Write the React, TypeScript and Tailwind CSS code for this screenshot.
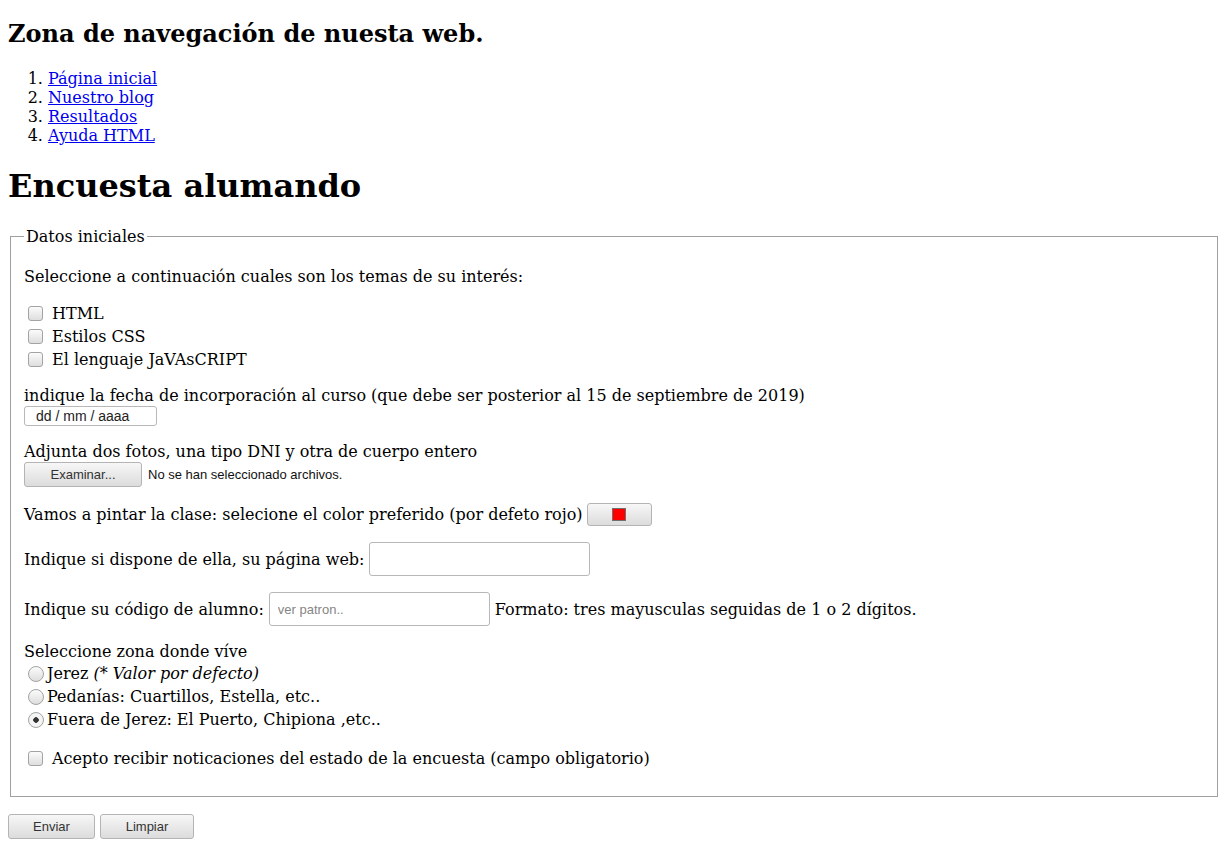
const links = ["Página inicial", "Nuestro blog", "Resultados", "Ayuda HTML"];

const temas = ["HTML", "Estilos CSS", "El lenguaje JaVAsCRIPT"];

const zonas = [
  { label: "Jerez ", note: "(* Valor por defecto)", checked: false },
  { label: "Pedanías: Cuartillos, Estella, etc..", note: "", checked: false },
  { label: "Fuera de Jerez: El Puerto, Chipiona ,etc..", note: "", checked: true },
];

const btn =
  "h-[25px] rounded-[3px] border border-[#b4b4b4] bg-gradient-to-b from-[#f7f7f7] to-[#dcdcdc] font-['Liberation_Sans',sans-serif] text-[13px] text-[#333]";

const checkbox =
  "ml-1 mr-[9px] h-[15px] w-[15px] shrink-0 appearance-none rounded-[3px] border border-[#a3a3a3] bg-gradient-to-b from-[#fbfbfb] to-[#dedede]";

const textInput =
  "h-[34px] w-[221px] rounded-[3px] border border-[#b8b8b8] bg-white px-2 font-['Liberation_Sans',sans-serif] text-[13px] outline-none placeholder:text-[#858585]";

export default function App() {
  return (
    <div className="min-h-screen bg-white p-2 font-['DejaVu_Serif',serif] text-[16px] leading-[19px] text-black">
      <h2 className="mt-3 text-[24px] font-bold leading-[28px]">Zona de navegación de nuesta web.</h2>

      <ol className="mt-[21px] list-decimal pl-10">
        {links.map((l) => (
          <li key={l}>
            <a href="#" className="text-[#0000ee] underline">
              {l}
            </a>
          </li>
        ))}
      </ol>

      <h1 className="mt-[22px] text-[32px] font-bold leading-[38px]">Encuesta alumando</h1>

      <form>
        <fieldset className="mx-0.5 mt-[22px] border border-[#a0a0a0] px-[13px] pb-[26px]">
          <legend className="px-0.5">Datos iniciales</legend>

          <p className="mt-[21px]">Seleccione a continuación cuales son los temas de su interés:</p>

          <div className="mt-4">
            {temas.map((t) => (
              <label key={t} className="flex h-[23px] items-center">
                <input type="checkbox" className={checkbox} />
                {t}
              </label>
            ))}
          </div>

          <p className="mt-[15px]">
            indique la fecha de incorporación al curso (que debe ser posterior al 15 de septiembre de 2019)
          </p>
          <input
            type="text"
            defaultValue="dd / mm / aaaa"
            className="mt-px block h-[20px] w-[133px] rounded-[3px] border border-[#b8b8b8] pl-[11px] font-['Liberation_Sans',sans-serif] text-[14px] text-[#222] outline-none"
          />

          <p className="mt-4">Adjunta dos fotos, una tipo DNI y otra de cuerpo entero</p>
          <div className="mt-px flex items-center">
            <button type="button" className={`${btn} w-[118px]`}>
              Examinar...
            </button>
            <span className="ml-[6px] font-['Liberation_Sans',sans-serif] text-[13px] text-[#111]">
              No se han seleccionado archivos.
            </span>
          </div>

          <div className="mt-4 flex h-[23px] items-center">
            <span>Vamos a pintar la clase: selecione el color preferido (por defeto rojo)</span>
            <button
              type="button"
              className="ml-[4px] flex h-[23px] w-[65px] items-center justify-center rounded-[3px] border border-[#b4b4b4] bg-gradient-to-b from-[#f7f7f7] to-[#dcdcdc]"
            >
              <span className="h-[13px] w-[14px] border border-[#6f6f6f] bg-[#ff0000]" />
            </button>
          </div>

          <div className="mt-4 flex items-center">
            <span>Indique si dispone de ella, su página web:</span>
            <input type="url" className={`${textInput} ml-[5px]`} />
          </div>

          <div className="mt-4 flex items-center">
            <span>Indique su código de alumno:</span>
            <input type="text" placeholder="ver patron.." className={`${textInput} ml-[5px]`} />
            <span className="ml-[5px]">Formato: tres mayusculas seguidas de 1 o 2 dígitos.</span>
          </div>

          <p className="mt-4">Seleccione zona donde víve</p>
          <div className="mt-px">
            {zonas.map((z) => (
              <label key={z.label} className="flex h-[23px] items-center">
                <input
                  type="radio"
                  name="zona"
                  defaultChecked={z.checked}
                  className="ml-[4px] mr-[3px] h-[16px] w-[16px] shrink-0 appearance-none rounded-full border border-[#a3a3a3] bg-gradient-to-b from-[#fbfbfb] to-[#dedede] checked:bg-[radial-gradient(circle,#333_0_2.5px,#f4f4f4_3px)]"
                />
                <span>
                  {z.label}
                  {z.note && <em>{z.note}</em>}
                </span>
              </label>
            ))}
          </div>

          <label className="mt-4 flex h-[23px] items-center">
            <input type="checkbox" className={checkbox} />
            Acepto recibir noticaciones del estado de la encuesta (campo obligatorio)
          </label>
        </fieldset>

        <div className="mt-[17px] flex">
          <button type="submit" className={`${btn} w-[87px]`}>
            Enviar
          </button>
          <button type="reset" className={`${btn} ml-[5px] w-[94px]`}>
            Limpiar
          </button>
        </div>
      </form>
    </div>
  );
}
